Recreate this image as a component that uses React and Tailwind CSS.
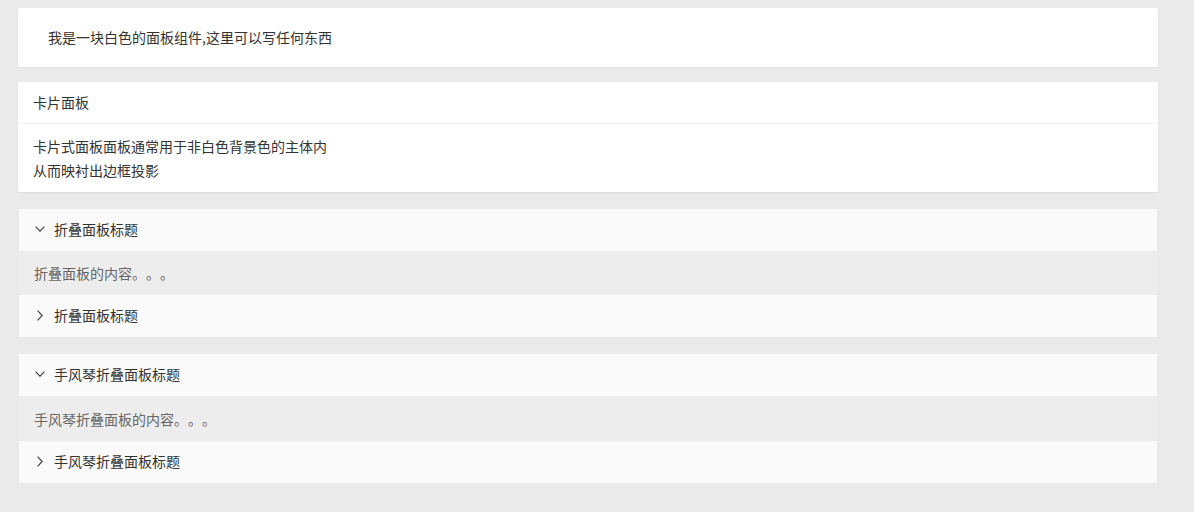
import React from "react";

const font = { fontFamily: '"Noto Sans CJK SC", "Noto Sans", sans-serif' };

function ChevronDown() {
  return (
    <svg width="10" height="6" viewBox="0 0 10 6" fill="none" className="block">
      <path d="M0.6 0.6 L5 5.2 L9.4 0.6" stroke="#444" strokeWidth="1.2" />
    </svg>
  );
}
function ChevronRight() {
  return (
    <svg width="6" height="11" viewBox="0 0 6 11" fill="none" className="block">
      <path d="M0.6 0.6 L5.2 5.5 L0.6 10.4" stroke="#444" strokeWidth="1.2" />
    </svg>
  );
}

function Header({ open, title }) {
  return (
    <div className="h-[42px] bg-[#fafafa] flex items-center pl-[16px] pb-[2px] text-[14px] text-[#333]">
      <div className="w-[10px] flex justify-center">
        {open ? <ChevronDown /> : <ChevronRight />}
      </div>
      <span className="ml-[9px] leading-[20px]">{title}</span>
    </div>
  );
}

function Collapse({ title, content, tall }) {
  return (
    <div className="mx-px flex flex-col">
      <Header open title={title} />
      <div className={(tall ? "h-[45px]" : "h-[44px]") + " bg-[#ededed] flex items-center pl-[15px] text-[14px] text-[#666]"}>
        <span className="leading-[20px] [text-spacing-trim:space-all]">{content}</span>
      </div>
      <Header open={false} title={title} />
    </div>
  );
}

export default function App() {
  return (
    <div style={font} className="min-h-[512px] w-full bg-[#eaeaea] px-[18px] pt-[8px] pb-[20px]">
      <div className="w-[1140px]">
        <div className="bg-white rounded-[2px] shadow-[0_1px_2px_rgba(0,0,0,0.06)] py-[19px] pl-[30px] text-[14px] leading-[21px] text-[#333]">
          我是一块白色的面板组件,这里可以写任何东西
        </div>
        <div className="mt-[15px] bg-white rounded-[2px] shadow-[0_1px_2px_rgba(0,0,0,0.06)] text-[14px] text-[#333]">
          <div className="h-[42px] flex items-center pl-[15px] pb-px border-b border-[#f2f2f2]">
            <span className="leading-[20px]">卡片面板</span>
          </div>
          <div className="pl-[15px] pt-[10px] pb-[10px] leading-[24px]">
            <div>卡片式面板面板通常用于非白色背景色的主体内</div>
            <div>从而映衬出边框投影</div>
          </div>
        </div>
        <div className="mt-[17px]">
          <Collapse title="折叠面板标题" content="折叠面板的内容。。。" />
        </div>
        <div className="mt-[17px]">
          <Collapse title="手风琴折叠面板标题" content="手风琴折叠面板的内容。。。" tall />
        </div>
      </div>
    </div>
  );
}
